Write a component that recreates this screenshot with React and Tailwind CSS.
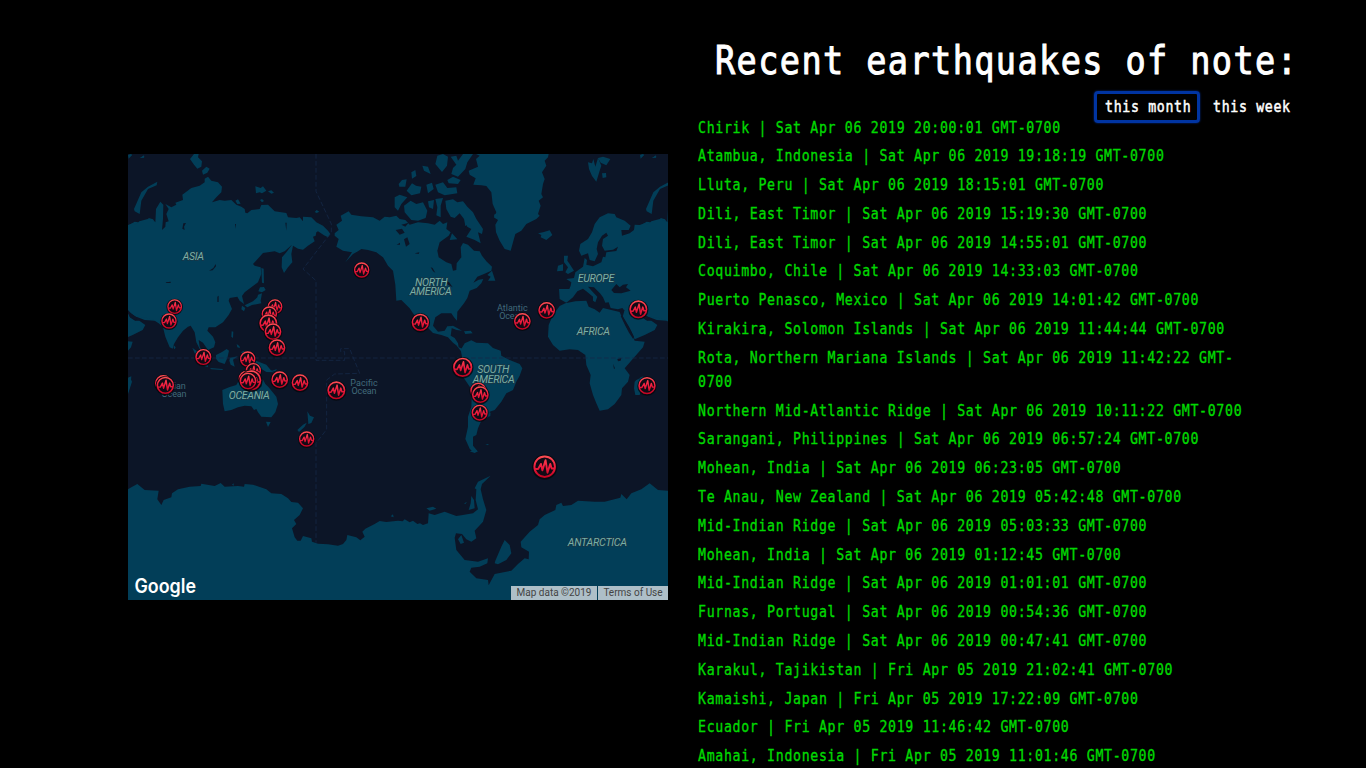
import React from "react";

const quakes = [
  "Chirik | Sat Apr 06 2019 20:00:01 GMT-0700",
  "Atambua, Indonesia | Sat Apr 06 2019 19:18:19 GMT-0700",
  "Lluta, Peru | Sat Apr 06 2019 18:15:01 GMT-0700",
  "Dili, East Timor | Sat Apr 06 2019 15:19:30 GMT-0700",
  "Dili, East Timor | Sat Apr 06 2019 14:55:01 GMT-0700",
  "Coquimbo, Chile | Sat Apr 06 2019 14:33:03 GMT-0700",
  "Puerto Penasco, Mexico | Sat Apr 06 2019 14:01:42 GMT-0700",
  "Kirakira, Solomon Islands | Sat Apr 06 2019 11:44:44 GMT-0700",
  "Rota, Northern Mariana Islands | Sat Apr 06 2019 11:42:22 GMT-0700",
  "Northern Mid-Atlantic Ridge | Sat Apr 06 2019 10:11:22 GMT-0700",
  "Sarangani, Philippines | Sat Apr 06 2019 06:57:24 GMT-0700",
  "Mohean, India | Sat Apr 06 2019 06:23:05 GMT-0700",
  "Te Anau, New Zealand | Sat Apr 06 2019 05:42:48 GMT-0700",
  "Mid-Indian Ridge | Sat Apr 06 2019 05:03:33 GMT-0700",
  "Mohean, India | Sat Apr 06 2019 01:12:45 GMT-0700",
  "Mid-Indian Ridge | Sat Apr 06 2019 01:01:01 GMT-0700",
  "Furnas, Portugal | Sat Apr 06 2019 00:54:36 GMT-0700",
  "Mid-Indian Ridge | Sat Apr 06 2019 00:47:41 GMT-0700",
  "Karakul, Tajikistan | Fri Apr 05 2019 21:02:41 GMT-0700",
  "Kamaishi, Japan | Fri Apr 05 2019 17:22:09 GMT-0700",
  "Ecuador | Fri Apr 05 2019 11:46:42 GMT-0700",
  "Amahai, Indonesia | Fri Apr 05 2019 11:01:46 GMT-0700",
];

// Marker centres and radii in map units (three units to a pixel)
const markers = [
  [140, 458, 23], [123, 501, 24], [441, 458, 23], [424, 480, 24], [421, 508, 28],
  [435, 533, 26], [447, 581, 26], [226, 609, 25], [359, 615, 24], [376, 650, 24],
  [356, 674, 25], [370, 679, 31], [360, 681, 26], [455, 677, 26], [516, 686, 26],
  [536, 855, 24], [106, 688, 26], [112, 694, 27], [701, 348, 24], [877, 505, 27],
  [1004, 640, 30], [1051, 710, 25], [1057, 722, 26], [1055, 776, 25], [625, 709, 28],
  [1183, 502, 26], [1256, 469, 26], [1531, 466, 28], [1557, 695, 27], [1250, 938, 35],
];

function Asia() {
  return (
    <g>
      <path d="M0 215 20 203 40 206 55 206 62 192 75 196 82 206 84 165 97 143 106 152 105 195 102 228 112 218 113 205 122 202 115 180 122 165 112 150 130 160 145 152 142 146 165 138 163 122 190 102 215 95 230 85 230 74 240 68 250 80 270 85 282 98 280 115 265 130 252 145 275 138 290 140 310 138 325 152 340 158 350 165 352 176 358 178 370 168 395 165 400 153 420 152 440 172 475 177 480 190 505 192 515 190 525 202 525 188 550 190 565 205 585 215 600 230 607 240 600 250 588 244 570 232 565 235 563 245 555 248 560 262 540 275 525 287 510 284 495 275 490 300 493 325 480 340 468 357 461 340 462 310 475 295 492 272 470 292 455 298 440 292 405 297 395 308 375 330 380 335 398 340 400 360 390 385 370 400 350 415 342 426 348 450 335 440 328 428 305 432 302 440 312 465 302 483 285 505 262 520 242 520 238 530 255 548 262 565 258 580 240 588 225 566 212 558 215 578 232 605 228 609 218 590 205 565 200 535 188 515 180 518 165 530 150 550 138 570 134 584 125 580 112 548 105 520 92 508 80 500 50 498 25 488 8 478 0 475Z" />
      <path d="M18 165 40 115 60 98 88 83 86 94 60 105 40 140 35 180 20 172ZM186 15 198 0 212 0 210 10 222 22 220 38 208 44 198 32ZM222 50 235 38 245 44 238 56 225 62ZM382 97 398 102 405 97 415 110 402 118 395 115 384 118ZM420 112 430 109 438 116 430 119ZM396 138 402 135 408 141 402 145ZM560 174 566 168 574 173 566 177ZM322 140 330 136 338 149 328 150ZM0 3 8 0 12 3 2 14ZM36 12 48 5 48 11Z" />
      <path d="M400 342 407 344 408 388 402 386ZM396 400 408 399 413 408 402 415 391 412ZM390 422 402 418 398 440 400 448 372 453 358 460 350 454 375 442 388 430ZM342 455 352 462 348 472 340 466ZM311 532 316 533 315 552 310 548ZM137 574 143 580 140 586 137 582ZM193 581 205 590 238 622 240 640 228 635 215 615 200 598ZM246 642 284 645 284 648 250 646ZM264 603 282 594 296 585 303 590 298 612 290 630 272 624 264 614ZM306 611 330 607 315 617 320 638 308 632 304 620ZM326 570 334 576 336 582 328 580ZM340 594 348 590 355 604 342 602ZM364 622 384 620 415 632 428 648 440 655 415 654 402 646 378 642 366 632Z" />
      <path d="M283 708 305 699 325 693 332 680 345 672 365 675 370 690 390 704 400 698 404 675 412 690 422 700 445 728 450 750 442 775 430 790 400 788 390 775 385 765 378 768 370 757 350 755 330 760 310 768 290 772 285 750ZM414 803 428 804 420 819ZM538 772 546 785 558 790 550 807 541 810ZM536 806 530 818 513 834 508 828 525 812Z" />
      <path d="M0 671 10 667 8 690 0 716ZM430 651 447 645 442 652Z" />
      <path className="fill-[#0c1527]" d="M3 388 15 385 24 395 17 402 26 410 20 417 30 428 22 440 8 432 0 425 6 412ZM243 350 256 342 263 330 264 337 254 349ZM113 385 128 383 128 387 115 387ZM166 208 174 207 168 218 170 228 163 224ZM321 210 324 210 323 224ZM472 206 476 206 475 230ZM268 428 272 425 272 444 268 444Z" />
    </g>
  );
}

function EuropeAfrica() {
  return (
    <g>
      <path d="M213 405 244 405 248 395 250 385 235 375 258 372 262 355 285 338 290 312 297 318 295 332 315 337 340 325 345 308 352 310 355 295 385 291 390 278 375 287 350 290 342 275 345 255 360 245 355 236 342 245 330 265 326 285 330 300 320 322 305 318 300 298 280 305 273 290 277 270 300 255 312 235 320 210 335 190 360 178 380 180 385 190 410 200 428 215 422 228 400 228 402 245 425 238 438 228 440 212 455 213 470 208 480 212 490 202 515 195 540 205 540 500 505 490 480 488 450 465 408 468 403 462 390 466 368 462 362 445 352 446 345 430 336 418 318 400 300 398 320 420 328 428 322 445 315 440 315 428 295 412 285 404 268 412 255 430 235 446 215 435Z" />
      <path d="M215 456 232 448 262 442 295 440 302 458 320 466 335 476 345 462 370 468 395 474 400 486 415 518 432 543 440 560 470 563 465 580 440 608 410 643 425 663 420 683 402 703 400 723 380 750 360 766 335 770 325 748 315 723 305 688 308 663 295 633 292 603 270 588 245 586 215 590 195 573 180 548 182 513 195 483Z" />
      <path d="M404 488 412 460 450 465 462 490 478 500 490 500 508 513 500 528 470 543 440 556 430 533Z" />
      <path d="M440 683 445 678 462 670 468 683 455 723 442 723 438 703ZM150 238 165 235 185 229 193 243 175 258 158 250 160 243ZM228 305 240 305 238 320 245 330 258 350 240 360 232 355 240 340 228 325ZM210 335 225 330 225 350 207 352ZM300 25 312 28 316 15 322 38 330 12 340 35 335 50 325 83 312 66 303 45ZM330 12 345 8 367 15 355 34 338 26ZM342 58 354 57 355 70 344 72ZM456 10 468 0 466 5ZM492 12 504 4 505 10Z" />
      <path className="fill-[#0c1527]" d="M370 408 385 390 395 400 405 392 420 390 414 400 428 410 400 418 378 417ZM398 486 404 486 424 520 438 548 435 554 423 536 412 515ZM452 463 462 475 470 482 483 491 478 500 462 490ZM388 615 400 612 398 620 390 622ZM375 629 381 643 378 645Z" />
    </g>
  );
}

function Americas() {
  return (
    <g>
      <path d="M620 238 632 228 625 212 642 200 638 185 662 172 670 182 700 187 735 190 755 200 770 188 785 190 805 185 815 195 832 198 845 212 870 205 900 208 920 212 935 200 945 210 958 205 955 225 968 235 962 245 935 265 928 290 932 310 955 325 970 330 975 350 985 348 986 328 1000 310 998 280 1005 267 1020 272 1038 290 1055 292 1062 305 1075 322 1092 338 1090 350 1068 360 1048 368 1036 386 1052 377 1066 375 1060 388 1046 402 1025 410 1018 432 1008 448 988 473 987 500 978 490 970 478 940 478 922 490 915 515 930 533 950 530 958 517 972 517 968 545 980 552 990 568 992 580 1005 585 998 590 985 574 975 566 960 550 940 543 915 537 898 520 880 508 865 490 855 478 845 463 820 438 805 440 802 392 795 350 780 335 765 310 745 295 720 288 700 285 690 292 675 300 652 325 672 295 645 290 625 278 632 255 620 245Z" />
      <path d="M998 588 1010 568 1030 559 1045 566 1080 568 1095 582 1118 590 1120 605 1145 618 1175 630 1183 643 1175 665 1165 683 1155 708 1135 718 1120 743 1100 768 1085 773 1087 785 1060 800 1050 823 1045 843 1035 848 1035 875 1049 892 1035 894 1025 884 1012 855 1020 818 1020 788 1030 758 1032 708 1015 683 995 653 993 638 1003 613Z" />
      <path d="M1044 0 1262 0 1260 10 1250 20 1255 35 1242 55 1250 75 1245 90 1240 120 1245 130 1232 140 1238 155 1230 180 1235 185 1225 195 1195 210 1180 230 1162 240 1155 265 1148 290 1130 285 1115 260 1104 235 1102 212 1110 198 1098 190 1105 175 1094 150 1090 115 1075 96 1060 94 1036 92 1043 73 1025 62 1022 50 1050 38 1044 15 1055 5Z" />
      <path d="M928 5 945 0 960 8 957 35 942 54 922 30ZM968 8 985 5 990 20 1005 0 1035 0 1018 25 1012 45 990 68 970 60 975 42 985 32ZM883 35 900 38 908 60 888 50ZM850 55 862 48 865 66 852 74ZM812 90 822 78 836 76 832 98 814 98ZM836 110 852 88 864 95 880 98 876 118 850 124ZM895 92 912 86 917 105 900 118ZM922 92 945 85 958 102 985 100 988 118 950 124 930 115ZM958 78 975 68 998 78 990 90 962 88ZM800 130 815 122 838 130 820 150 810 170 800 160ZM828 155 848 140 865 150 885 145 898 170 893 192 870 200 850 198 830 175ZM900 142 918 138 915 165 903 160ZM922 135 945 132 938 155 938 190 925 184 928 160ZM952 140 975 136 988 145 1005 142 1018 158 1035 175 1045 195 1065 225 1062 240 1050 235 1058 268 1040 258 1015 248 1030 225 1012 215 1008 195 995 178 980 192 968 188 955 165ZM972 238 988 256 965 258ZM1078 363 1092 350 1102 380 1080 380 1088 368Z" />
      <path d="M960 518 975 515 1002 530 986 528ZM1008 532 1028 530 1034 538 1012 540ZM1082 782 1088 775 1086 788ZM1072 871 1082 870 1080 874ZM1098 182 1108 178 1110 194 1100 192Z" />
      <path className="fill-[#0c1527]" d="M803 228 822 224 830 236 815 242ZM828 256 838 250 845 270 834 278ZM806 272 816 266 816 272ZM860 298 874 295 872 300ZM908 340 914 342 922 356 915 352ZM946 378 963 384 974 400 960 392ZM820 212 842 206 832 218ZM1016 212 1020 232 1008 228Z" />
    </g>
  );
}

function Antarctica() {
  return (
    <g transform="translate(0 888)">
      <path d="M0 118 10 112 28 102 50 120 92 122 88 148 100 165 107 150 130 142 132 130 150 118 185 110 218 108 220 101 260 108 278 99 290 110 330 108 348 110 350 102 375 104 415 118 430 130 460 132 480 145 490 156 510 158 525 175 515 195 498 210 505 222 492 235 500 262 508 272 518 272 525 258 550 265 552 275 570 281 600 283 630 287 645 282 655 270 658 255 685 262 697 271 710 260 703 245 712 236 740 222 755 213 775 216 810 212 824 214 830 208 845 217 855 212 868 222 876 220 885 225 900 220 902 190 920 195 950 185 985 198 1000 196 1035 190 1050 178 1043 150 1045 118 1040 115 1050 95 1088 77 1062 102 1058 118 1065 148 1075 180 1065 215 1040 242 1045 265 1030 275 1015 268 1002 252 984 250 980 263 985 300 1010 330 1050 335 1080 325 1078 340 1055 350 1030 353 1025 365 1045 385 1080 390 1082 406 1100 372 1150 362 1170 342 1190 325 1202 328 1203 305 1180 292 1178 275 1205 245 1230 225 1235 208 1250 195 1282 180 1285 165 1300 158 1305 168 1330 165 1350 152 1400 155 1430 155 1477 143 1480 132 1496 148 1510 130 1540 118 1565 100 1590 120 1620 122 1620 450 0 450Z" />
      <path d="M895 175 915 170 925 176 905 182ZM1022 180 1028 160 1030 138 1038 150 1040 175ZM1008 160 1017 156 1012 162ZM1102 332 1120 290 1130 270 1145 285 1150 310 1135 330 1110 343 1100 340ZM990 268 1000 255 1008 278 998 282ZM1025 4 1040 0 1050 4 1040 9ZM312 104 317 100 317 107ZM788 199 795 193 797 202Z" />
    </g>
  );
}

function Marker({ x, y, r }) {
  return (
    <g transform={`translate(${x} ${y}) scale(${r / 25})`}>
      <circle r="27" cy="1" fill="#05070d" opacity="0.8" />
      <circle r="22" fill="#120a15" stroke="url(#ring)" strokeWidth="4.2" />
      <path d="M-21 5H-14L-8-6-5 8 2-14 6 13 12-6 15 4H21" fill="none" stroke="url(#ring)" strokeWidth="4" strokeLinejoin="round" />
    </g>
  );
}

function QuakeMap() {
  const label = "fill-[#78b0a6] stroke-[#1a3646]";
  const sea = "fill-[#416a7a]";
  return (
    <svg viewBox="0 0 1620 1338" className="block h-[446px] w-[540px] bg-[#0c1527] font-['Roboto',sans-serif]">
      <defs>
        <linearGradient id="ring" gradientUnits="userSpaceOnUse" x1="0" y1="-24" x2="0" y2="24">
          <stop offset="0" stopColor="#ff5055" />
          <stop offset="0.5" stopColor="#ee1c3e" />
          <stop offset="1" stopColor="#c00220" />
        </linearGradient>
      </defs>
      <g className="fill-[#023e58]">
        <Asia />
        <g transform="translate(1536 0)"><Asia /></g>
        <g transform="translate(1080 0)"><EuropeAfrica /></g>
        <g transform="translate(-456 0)"><EuropeAfrica /></g>
        <Americas />
        <Antarctica />
      </g>
      <g className="fill-none stroke-[#16294a]" strokeWidth="3" strokeDasharray="14 7" opacity="0.75">
        <path d="M0 612H1620M564 0V112L610 210V235L525 345 564 380V619H650V593H638V584H665L695 658 620 660 596 678V826L564 868V1166" />
      </g>
      <g fontSize="32" fontStyle="italic" textAnchor="middle" strokeWidth="4" paintOrder="stroke" className={label}>
        <text x="196" y="318" textLength="64">ASIA</text>
        <text x="910" y="395" textLength="98">NORTH</text>
        <text x="908" y="422" textLength="126">AMERICA</text>
        <text x="1404" y="383" textLength="110">EUROPE</text>
        <text x="1396" y="542" textLength="100">AFRICA</text>
        <text x="364" y="735" textLength="123">OCEANIA</text>
        <text x="1096" y="656" textLength="96">SOUTH</text>
        <text x="1097" y="686" textLength="126">AMERICA</text>
        <text x="1408" y="1175" textLength="178">ANTARCTICA</text>
      </g>
      <g fontSize="27" textAnchor="middle" className={sea}>
        <text x="708" y="696" textLength="83">Pacific</text>
        <text x="708" y="720" textLength="75">Ocean</text>
        <text x="1153" y="471" textLength="92">Atlantic</text>
        <text x="1151" y="495" textLength="75">Ocean</text>
        <text x="137" y="705" textLength="72">Indian</text>
        <text x="138" y="729" textLength="75">Ocean</text>
      </g>
      {markers.map(([x, y, r], i) => <Marker key={i} x={x} y={y} r={r} />)}
    </svg>
  );
}

export default function App() {
  return (
    <div className="flex h-screen overflow-hidden bg-black font-['DejaVu_Sans_Mono',monospace] text-white">
      <section className="relative mt-[154px] ml-32 h-[446px] w-[540px] shrink-0">
        <QuakeMap />
        <svg viewBox="0 0 66 26" className="absolute bottom-0 left-[5px] h-[26px] w-[66px] overflow-visible">
          <text x="1.5" y="18.5" textLength="61.5" lengthAdjust="spacingAndGlyphs" className="fill-white font-['Inter',sans-serif] text-[19.5px] font-semibold">Google</text>
        </svg>
        <div className="absolute right-0 bottom-0 flex h-3.5 gap-px font-['Roboto',sans-serif] text-[10px] leading-[14px] whitespace-nowrap text-[#444]">
          <span className="w-[86px] bg-[#aebfc8] text-center">Map data ©2019</span>
          <span className="w-[70px] bg-[#aebfc8] text-center">Terms of Use</span>
        </div>
      </section>
      <main className="ml-[30px] w-[598px] shrink-0">
        <h1 className="mt-[37px] ml-[17px] h-12 w-[684px] origin-left scale-x-[0.86] text-[39px] leading-[48px] tracking-[1.64px] whitespace-nowrap [-webkit-text-stroke:1px_white]">Recent earthquakes of note:</h1>
        <nav className="mt-[6px] ml-[396px] flex h-8 items-center">
          <button className="h-8 w-[106px] rounded-sm border-[3px] border-[#0034a2] pl-2 text-left shadow-[0_0_2px_#0034a2]">
            <span className="block w-[110px] origin-left scale-x-[0.86] text-[15.4px] leading-6 tracking-[0.775px] whitespace-nowrap [-webkit-text-stroke:0.5px_white]">this month</span>
          </button>
          <button className="ml-[13px] h-8 w-20 text-left">
            <span className="block w-[100px] origin-left scale-x-[0.86] text-[15.4px] leading-6 tracking-[0.775px] whitespace-nowrap [-webkit-text-stroke:0.5px_white]">this week</span>
          </button>
        </nav>
        <ul className="-mt-[7.5px] flex w-[640px] origin-left scale-x-[0.86] flex-col gap-[4.8px] text-[15.4px] leading-6 tracking-[0.78px] text-[#00d900] [-webkit-text-stroke:0.35px_#00d900]">
          {quakes.map((quake, i) => <li key={i}>{quake}</li>)}
        </ul>
      </main>
    </div>
  );
}
